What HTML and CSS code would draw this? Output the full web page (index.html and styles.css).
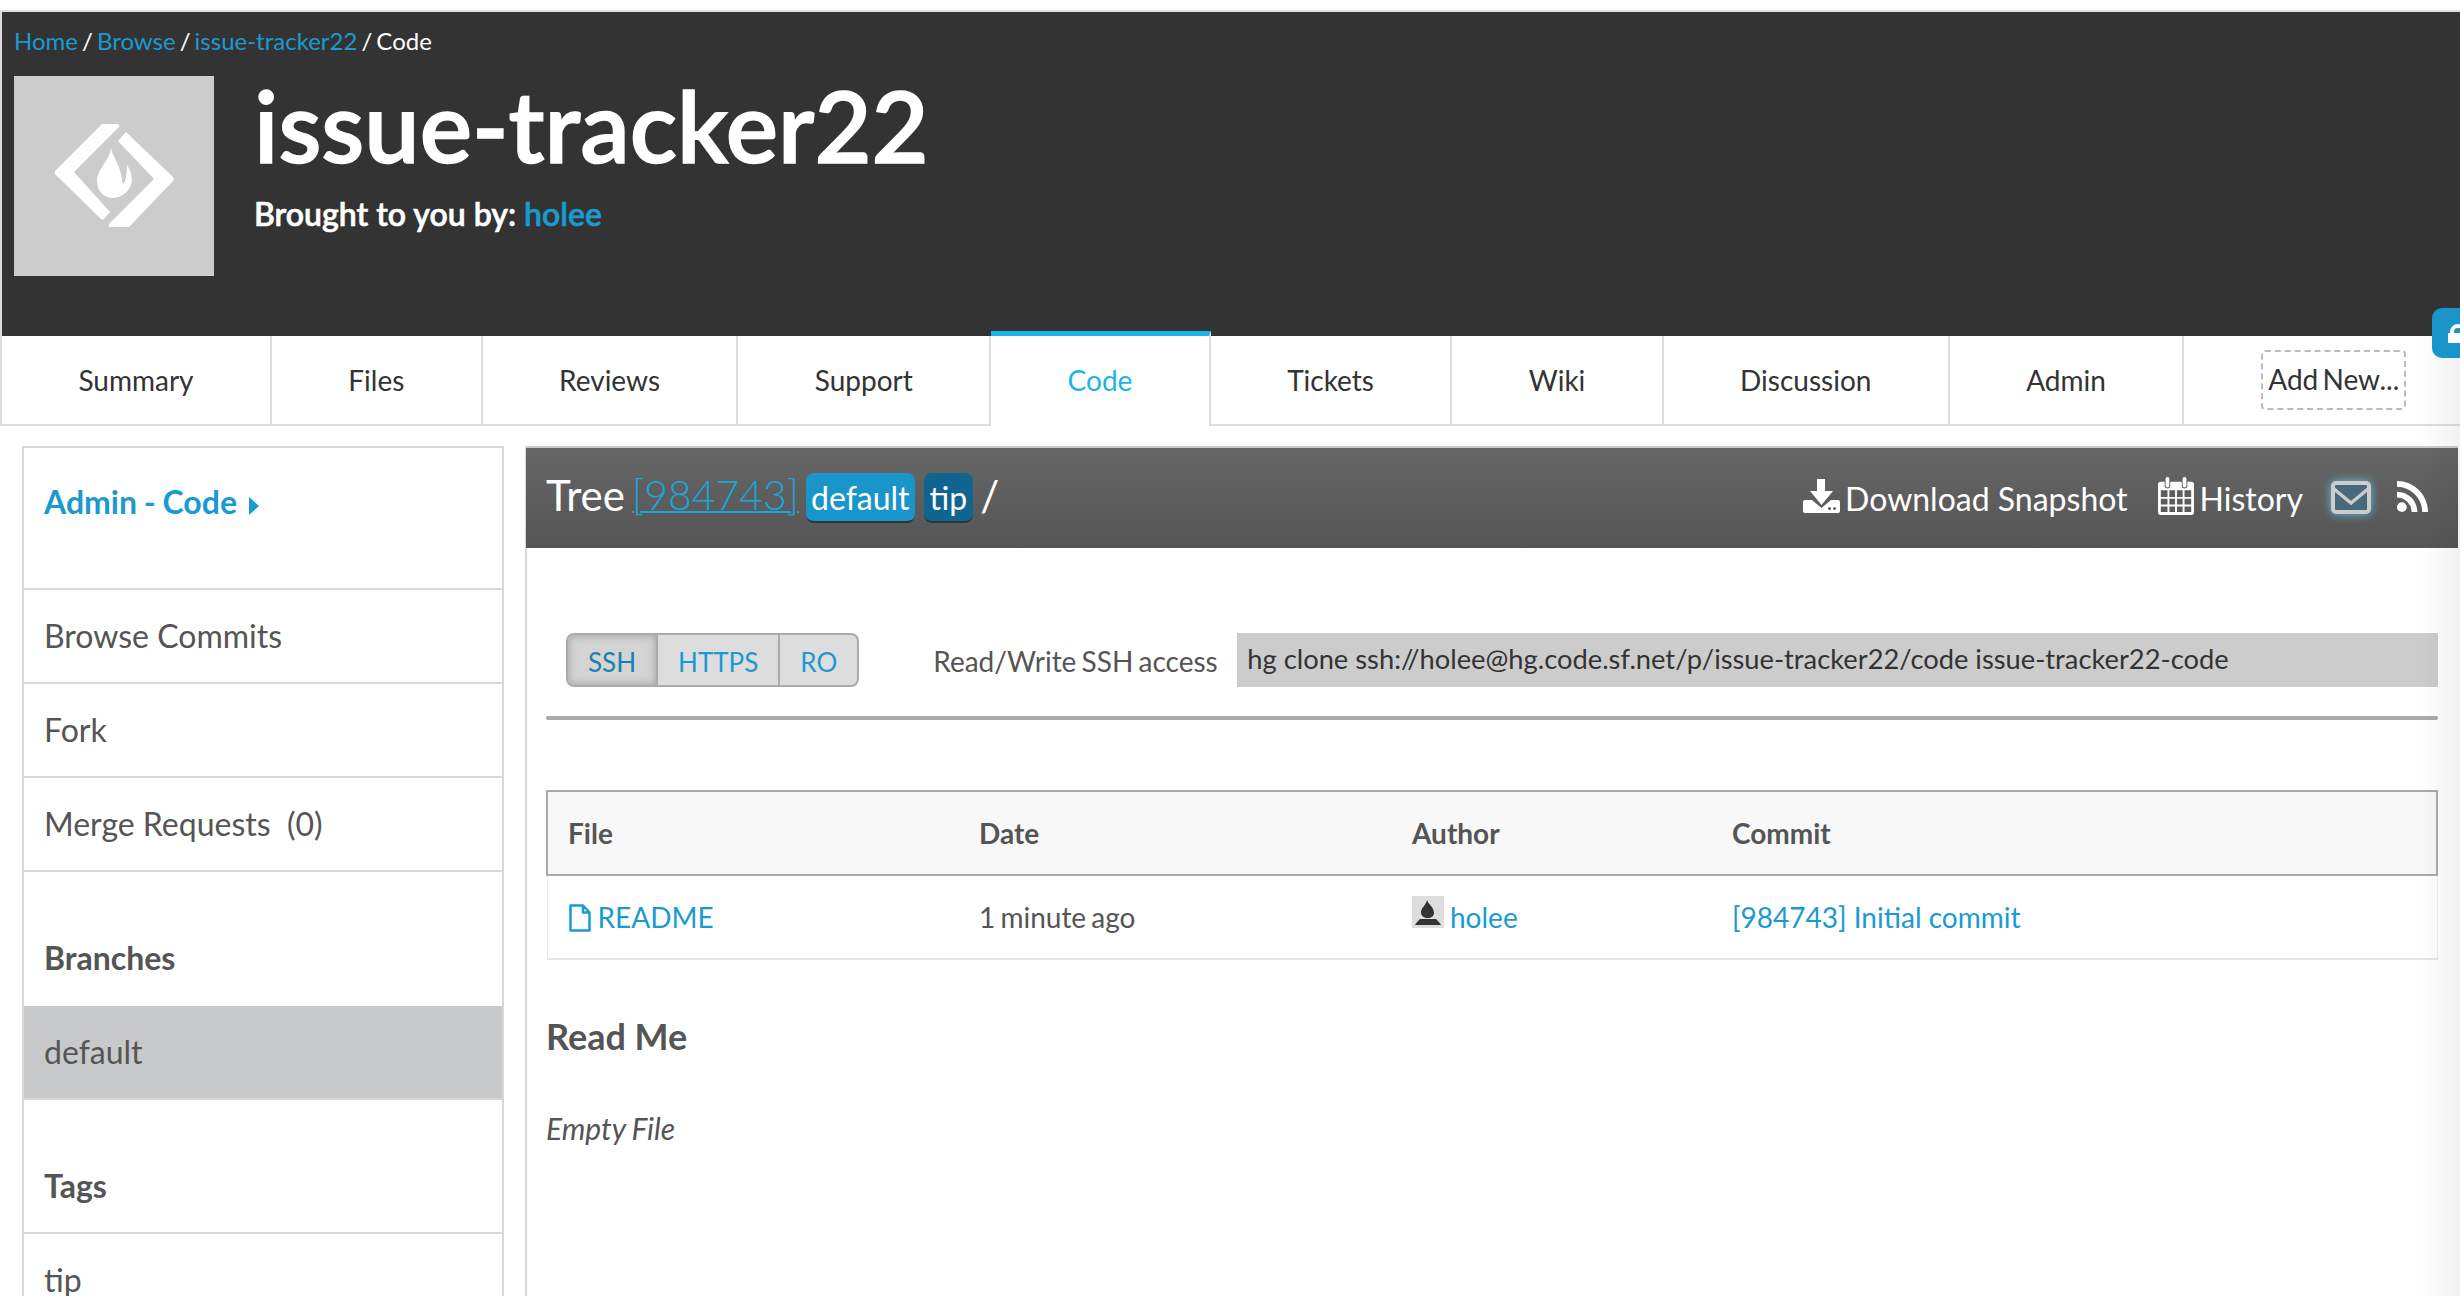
FILE: index.html
```html
<!DOCTYPE html>
<html lang="en">
<head>
<meta charset="utf-8">
<title>issue-tracker22 / Code</title>
<link rel="stylesheet" href="styles.css">
</head>
<body>
<div class="page">
  <header class="top">
    <nav class="crumbs"><a href="#">Home</a> / <a href="#">Browse</a> / <a href="#">issue-tracker22</a> / <span>Code</span></nav>
    <div class="project">
      <div class="logo">
        <svg viewBox="0 0 200 200" width="200" height="200"><g fill="#fff" transform="translate(-14 -76)"><path d="M102 124H117a2 2 0 0 1 2 3L74 172L110 212L104 219a3 3 0 0 1-3 0L56 175a3 3 0 0 1 0-5z"/><path d="M126 132L173 177a3 3 0 0 1 0 4L130 226a3 3 0 0 1-2 1H111a2 2 0 0 1-2-3L154 179L118 141z"/><path d="M111 148C113 158 121 166 122 180C122 183 123 184 124 183C126 180 127 172 127 165C131 171 133 178 131 185C128 193 120 198 113 198C104 198 97 191 97 181C97 169 109 162 111 148z"/></g></svg>
      </div>
      <div class="project-text">
        <h1>issue-tracker22</h1>
        <p>Brought to you by: <a href="#">holee</a></p>
      </div>
    </div>
  </header>

  <nav class="tabs">
    <a class="tab" href="#">Summary</a>
    <a class="tab" href="#">Files</a>
    <a class="tab" href="#">Reviews</a>
    <a class="tab" href="#">Support</a>
    <a class="tab active" href="#">Code</a>
    <a class="tab" href="#">Tickets</a>
    <a class="tab" href="#">Wiki</a>
    <a class="tab" href="#">Discussion</a>
    <a class="tab" href="#">Admin</a>
    <div class="tab-add"><a href="#">Add New...</a></div>
  </nav>

  <div class="content">
    <aside class="side">
      <div class="side-head"><a href="#">Admin - Code</a><span class="caret"></span></div>
      <a class="side-item" href="#">Browse Commits</a>
      <a class="side-item" href="#">Fork</a>
      <a class="side-item" href="#">Merge Requests&nbsp; (0)</a>
      <div class="side-title">Branches</div>
      <a class="side-item selected" href="#">default</a>
      <div class="side-title tags">Tags</div>
      <a class="side-item" href="#">tip</a>
    </aside>

    <main class="main">
      <div class="bar">
        <div class="bar-left">
          <span class="bar-text">Tree</span>
          <a class="rev bar-text" href="#">[984743]</a>
          <span class="badge">default</span>
          <span class="badge dark">tip</span>
          <span class="bar-text">/</span>
        </div>
        <div class="bar-right">
          <a href="#" class="bar-link download">
            <svg class="ic" viewBox="0 0 37 34" width="37" height="34"><path fill="#fff" d="M14 0h8v12h8L18.5 26 7 12h7z"/><path fill="#fff" d="M2 21h7l9.5 8 9.5-8h7a2 2 0 0 1 2 2v9a2 2 0 0 1-2 2H2a2 2 0 0 1-2-2v-9a2 2 0 0 1 2-2z"/><circle cx="26.5" cy="29.5" r="1.5" fill="#5e5e5e"/><circle cx="31.5" cy="29.5" r="1.5" fill="#5e5e5e"/></svg>
            Download Snapshot
          </a>
          <a href="#" class="bar-link">
            <svg class="ic" viewBox="0 0 38 40" width="36" height="40"><path fill="#fff" fill-rule="evenodd" d="M3 5h4v4a3 3 0 0 0 6 0V5h12v4a3 3 0 0 0 6 0V5h4a3 3 0 0 1 3 3v29a3 3 0 0 1-3 3H3a3 3 0 0 1-3-3V8a3 3 0 0 1 3-3zM3 14v7h7v-7zm9 0v7h6v-7zm8 0v7h6v-7zm8 0v7h7v-7zM3 23v6h7v-6zm9 0v6h6v-6zm8 0v6h6v-6zm8 0v6h7v-6zM3 31v6h7v-6zm9 0v6h6v-6zm8 0v6h6v-6zm8 0v6h7v-6z"/><rect x="8" y="0" width="4" height="11" rx="2" fill="#fff"/><rect x="26" y="0" width="4" height="11" rx="2" fill="#fff"/></svg>
            History
          </a>
          <a href="#" class="mail" aria-label="Subscribe">
            <svg viewBox="0 0 40 33" width="40" height="33"><rect x="2" y="2" width="36" height="29" rx="3" fill="#466a7c" stroke="#ccc" stroke-width="4"/><path d="M3 8l17 14L37 8" fill="none" stroke="#ccc" stroke-width="3.5"/></svg>
          </a>
          <a href="#" class="rss" aria-label="Feed">
            <svg viewBox="0 0 32 32" width="31" height="31"><circle cx="5" cy="27" r="5" fill="#fff"/><path d="M0 11v6a15 15 0 0 1 15 15h6A21 21 0 0 0 0 11z" fill="#fff"/><path d="M0 0v6a26 26 0 0 1 26 26h6A32 32 0 0 0 0 0z" fill="#fff"/></svg>
          </a>
        </div>
      </div>

      <div class="body">
        <div class="access">
          <div class="btns">
            <a class="btn on" href="#">SSH</a><a class="btn" href="#">HTTPS</a><a class="btn" href="#">RO</a>
          </div>
          <label class="access-label">Read/Write SSH access</label>
          <div class="clone">hg clone ssh://holee@hg.code.sf.net/p/issue-tracker22/code issue-tracker22-code</div>
        </div>
        <div class="rule"></div>

        <table class="files">
          <thead>
            <tr><th class="c1">File</th><th class="c2">Date</th><th class="c3">Author</th><th>Commit</th></tr>
          </thead>
          <tbody>
            <tr>
              <td><a href="#"><svg class="file-ic" viewBox="0 0 24 28" width="24" height="28"><path d="M2.5 1.5H15l6.5 7V26.5H2.5zM15 1.5V8.5h6.5" fill="none" stroke="#1a9ad0" stroke-width="2.5" stroke-linejoin="round"/></svg>README</a></td>
              <td class="date">1 minute ago</td>
              <td><div class="author"><span class="avatar"><svg viewBox="0 0 32 32" width="32" height="32"><rect width="32" height="32" fill="#ddd"/><path d="M15 4c1 4 7 7 7 13 0 3-3 5-6 5-4 0-7-2-7-6 0-4 5-7 6-12z" fill="#333"/><path d="M8 23h16c2 2 4 4 5 6H3c1-2 3-4 5-6z" fill="#333"/></svg></span><a href="#">holee</a></div></td>
              <td><a href="#">[984743] Initial commit</a></td>
            </tr>
          </tbody>
        </table>

        <h2>Read Me</h2>
        <p class="empty">Empty File</p>
      </div>
    </main>
  </div>

  <div class="edge"></div>
  <div class="lock"><svg viewBox="0 0 28 50" width="28" height="50"><path d="M20 28V24a6 6 0 0 1 12 0V28" fill="none" stroke="#fff" stroke-width="4"/><rect x="16" y="25" width="24" height="10" rx="1" fill="#fff"/></svg></div>
</div>
</body>
</html>
```
FILE: styles.css
```css
* { box-sizing: border-box; }
html, body { margin: 0; padding: 0; }
body { font-family: Lato, "Open Sans", sans-serif; color: #555; background: #fff; overflow: hidden; height: 1296px; }
a { color: #1a9ad0; text-decoration: none; }
.page { position: relative; height: 1296px; overflow: hidden; padding-top: 10px; }

.top { height: 326px; background: #333; border-top: 2px solid #ddd; border-left: 2px solid #ddd; padding: 13px 12px 0; color: #fff; }
.crumbs { font-size: 24px; line-height: 32px; height: 35px; word-spacing: -2.1px; }
.crumbs span { color: #fff; }
.project { display: flex; gap: 40px; margin-top: 16px; }
.logo { width: 200px; height: 200px; background: #ccc; flex: none; }
.logo svg { display: block; }
.project-text { margin-top: -6px; }
h1 { margin: 0; font-size: 98.5px; line-height: 110px; font-weight: 600; color: #fff; -webkit-text-stroke: 1.5px #fff; }
.project-text p { margin: 14px 0 0 0; font-size: 32px; line-height: 40px; font-weight: 600; -webkit-text-stroke: 0.6px; }
.project-text p a { font-weight: 600; }

.tabs { display: flex; height: 90px; border-bottom: 2px solid #ddd; border-left: 2px solid #ddd; align-items: stretch; }
.tab { display: flex; align-items: center; justify-content: center; color: #333; font-size: 28px; padding: 0 76.4px; border-right: 2px solid #ddd; height: 88px; }
.tab.active { color: #1ab4e6; border-top: 5px solid #1ab4e6; margin-top: -5px; height: 95px; background: #fff; padding-bottom: 2px; }
.tab-add { flex: 1; display: flex; align-items: center; padding-left: 77px; font-size: 28px; word-spacing: -3px; }
.tab-add a { color: #333; border: 2px dashed #bbb; border-radius: 4px; height: 60px; line-height: 54px; padding: 0 5px; display: block; }

.content { display: flex; gap: 21px; padding: 20px 0 0 22px; }

.side { width: 482px; flex: none; border: 2px solid #d8d8d8; border-bottom: 0; font-size: 32px; }
.side-head { height: 142px; padding: 34px 20px 0; font-weight: 700; border-bottom: 2px solid #d8d8d8; line-height: 40px; word-spacing: -1px; }
.caret { display: inline-block; margin-left: 12px; border-left: 10px solid #1a9ad0; border-top: 9px solid transparent; border-bottom: 9px solid transparent; vertical-align: -1px; }
.side-item { display: block; height: 94px; line-height: 92px; padding: 0 20px; color: #555; border-bottom: 2px solid #d8d8d8; }
.side-title { font-weight: 700; height: 134px; padding: 66px 20px 0; line-height: 40px; color: #555; }
.side-title.tags { height: 134px; padding-top: 66px; border-bottom: 2px solid #d8d8d8; }
.side-item.selected { background: #c8c9cb; }

.main { flex: 1; border-left: 2px solid #d8d8d8; margin-right: 2px; min-width: 0; }
.bar { height: 102px; background: linear-gradient(#666, #555); border-top: 2px solid #ccc; display: flex; justify-content: space-between; align-items: center; padding: 0 30px 0 20px; color: #fff; margin-left: -1px; }
.bar-left { display: flex; align-items: center; gap: 7px; }
.bar-text { font-size: 42px; line-height: 50px; margin-top: -6px; }
.bar-text.rev { font-size: 41px; color: #1aa6da; font-weight: 300; text-decoration: underline; text-decoration-thickness: 2px; }
.badge { font-size: 32px; line-height: 42px; height: 50px; padding: 4px 5px 0; background: #1a95c9; border-radius: 8px; border-bottom: 2px solid #333; font-weight: 400; }
.badge.dark { background: #0f6490; margin-left: 2px; padding: 4px 6px 0; }
.bar-right { display: flex; align-items: center; font-size: 32px; }
.bar-link { color: #fff; display: flex; align-items: center; gap: 6px; margin-right: 28px; }
.bar-link.download { gap: 5px; margin-right: 30px; }
.ic { margin-top: -4px; }
.mail { display: flex; margin-right: 26px; filter: drop-shadow(0 0 5px #5fbfe8); margin-top: -2px; }
.rss { display: flex; margin-top: -4px; }

.body { padding: 84px 20px 0 19px; }
.access { display: flex; align-items: center; height: 56px; }
.btns { display: flex; margin-left: 20px; border: 2px solid #aaa; border-radius: 8px; background: #ddd; height: 54px; overflow: hidden; }
.btn { font-size: 26px; line-height: 54px; color: #1a9ad0; padding: 0 20px; border-right: 2px solid #aaa; }
.btn:last-child { border-right: 0; }
.btn.on { box-shadow: inset 0 0 8px #999; color: #1a80ad; background: #d4d4d4; }
.access-label { margin-left: 74px; padding-top: 2px; font-size: 28px; color: #555; width: 304px; flex: none; word-spacing: -2px; }
.clone { flex: 1; height: 54px; line-height: 52px; background: #ccc; padding: 0 10px; font-size: 27.3px; color: #333; }
.rule { height: 4px; background: #aaa; border-radius: 2px; margin-top: 28px; }

.files { width: 100%; border-collapse: collapse; margin-top: 70px; font-size: 28px; table-layout: fixed; }
.files th { text-align: left; background: #f8f8f8; height: 84px; padding: 0 22px; font-weight: 700; color: #555; border-top: 2px solid #aaa; border-bottom: 2px solid #aaa; }
.files th:first-child { border-left: 2px solid #aaa; padding-left: 20px; }
.files th:last-child { border-right: 2px solid #aaa; }
.files .c1 { width: 410px; }
.files .c2 { width: 433px; }
.files .c3 { width: 320px; }
.files td { height: 84px; padding: 0 22px; color: #555; border-bottom: 2px solid #e5e5e5; }
.files td:first-child { border-left: 1px solid #eee; padding-left: 20px; }
.files td:last-child { border-right: 1px solid #eee; }
.files td.date { word-spacing: -2px; }
.file-ic { vertical-align: -4px; margin-right: 6px; }
.author { display: flex; align-items: center; gap: 6px; }
.avatar { display: block; line-height: 0; margin-bottom: 10px; }
.avatar svg { display: block; }

h2 { margin: 54px 0 0; font-size: 36px; line-height: 44px; font-weight: 700; color: #555; }
.empty { margin: 52px 0 0; font-size: 30px; line-height: 36px; font-style: italic; color: #555; word-spacing: -1px; }

.edge { position: absolute; top: 336px; right: 0; bottom: 0; width: 40px; background: linear-gradient(to right, rgba(0,0,0,0), rgba(0,0,0,.05)); pointer-events: none; }
.lock { position: absolute; top: 308px; right: 0; width: 28px; height: 50px; background: #1a95c9; border-radius: 10px 0 0 10px; overflow: hidden; }
.lock svg { display: block; }
```
